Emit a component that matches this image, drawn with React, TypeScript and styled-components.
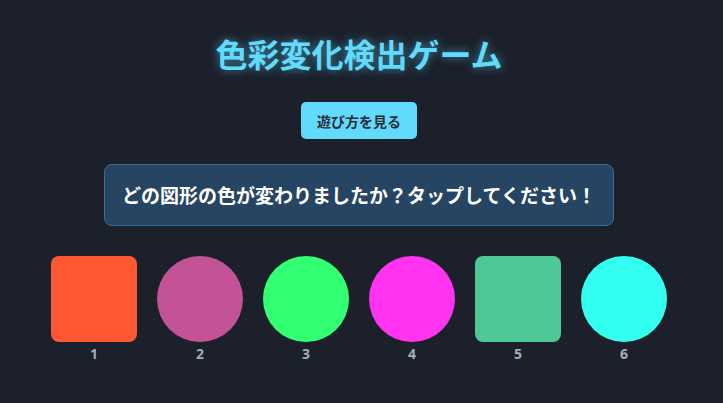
import React from 'react'
import styled, { createGlobalStyle } from 'styled-components'

const GlobalStyle = createGlobalStyle`
    html, body {
        margin: 0;
        padding: 0;
        background: #1b202b;
    }
    body {
        font-family: 'Noto Sans', 'Noto Sans CJK JP', sans-serif;
    }
`

const Page = styled.div`
    min-height: 403px;
    display: flex;
    flex-direction: column;
    align-items: center;
    padding-top: 35px;
    padding-right: 5px;
    box-sizing: border-box;
`

const Title = styled.h1`
    margin: 0;
    font-size: 32px;
    line-height: 40px;
    font-weight: 700;
    color: #61dafb;
    text-shadow: 0 0 10px rgba(97, 218, 251, 0.6);
`

const HelpButton = styled.button`
    margin-top: 27px;
    width: 116px;
    height: 37px;
    border: none;
    border-radius: 5px;
    background: #61dafb;
    color: #282c34;
    font-family: inherit;
    font-size: 14px;
    font-weight: 700;
    cursor: pointer;
`

const Question = styled.div`
    margin-top: 25px;
    width: 510px;
    height: 62px;
    box-sizing: border-box;
    display: flex;
    align-items: center;
    justify-content: center;
    background: #264563;
    border: 1px solid #3b6d9c;
    border-radius: 8px;
    color: #ffffff;
    font-size: 19px;
    font-weight: 700;
`

const ShapeRow = styled.div`
    margin-top: 30px;
    display: flex;
    gap: 20px;
`

const ShapeItem = styled.div`
    display: flex;
    flex-direction: column;
    align-items: center;
    cursor: pointer;
`

const Shape = styled.div<{ $color: string; $circle: boolean }>`
    width: 86px;
    height: 86px;
    background: ${p => p.$color};
    border-radius: ${p => (p.$circle ? '50%' : '8px')};
`

const Label = styled.span`
    margin-top: 2px;
    font-size: 14px;
    line-height: 20px;
    font-weight: 700;
    color: #a0aec0;
`

const shapes = [
    { color: '#ff5733', circle: false },
    { color: '#c45296', circle: true },
    { color: '#33ff73', circle: true },
    { color: '#ff33f0', circle: true },
    { color: '#4ec896', circle: false },
    { color: '#33fff0', circle: true },
]

export default function App() {
    return (
        <>
            <GlobalStyle />
            <Page>
                <Title>色彩変化検出ゲーム</Title>
                <HelpButton>遊び方を見る</HelpButton>
                <Question>どの図形の色が変わりましたか？タップしてください！</Question>
                <ShapeRow>
                    {shapes.map((s, i) => (
                        <ShapeItem key={i}>
                            <Shape $color={s.color} $circle={s.circle} />
                            <Label>{i + 1}</Label>
                        </ShapeItem>
                    ))}
                </ShapeRow>
            </Page>
        </>
    )
}
